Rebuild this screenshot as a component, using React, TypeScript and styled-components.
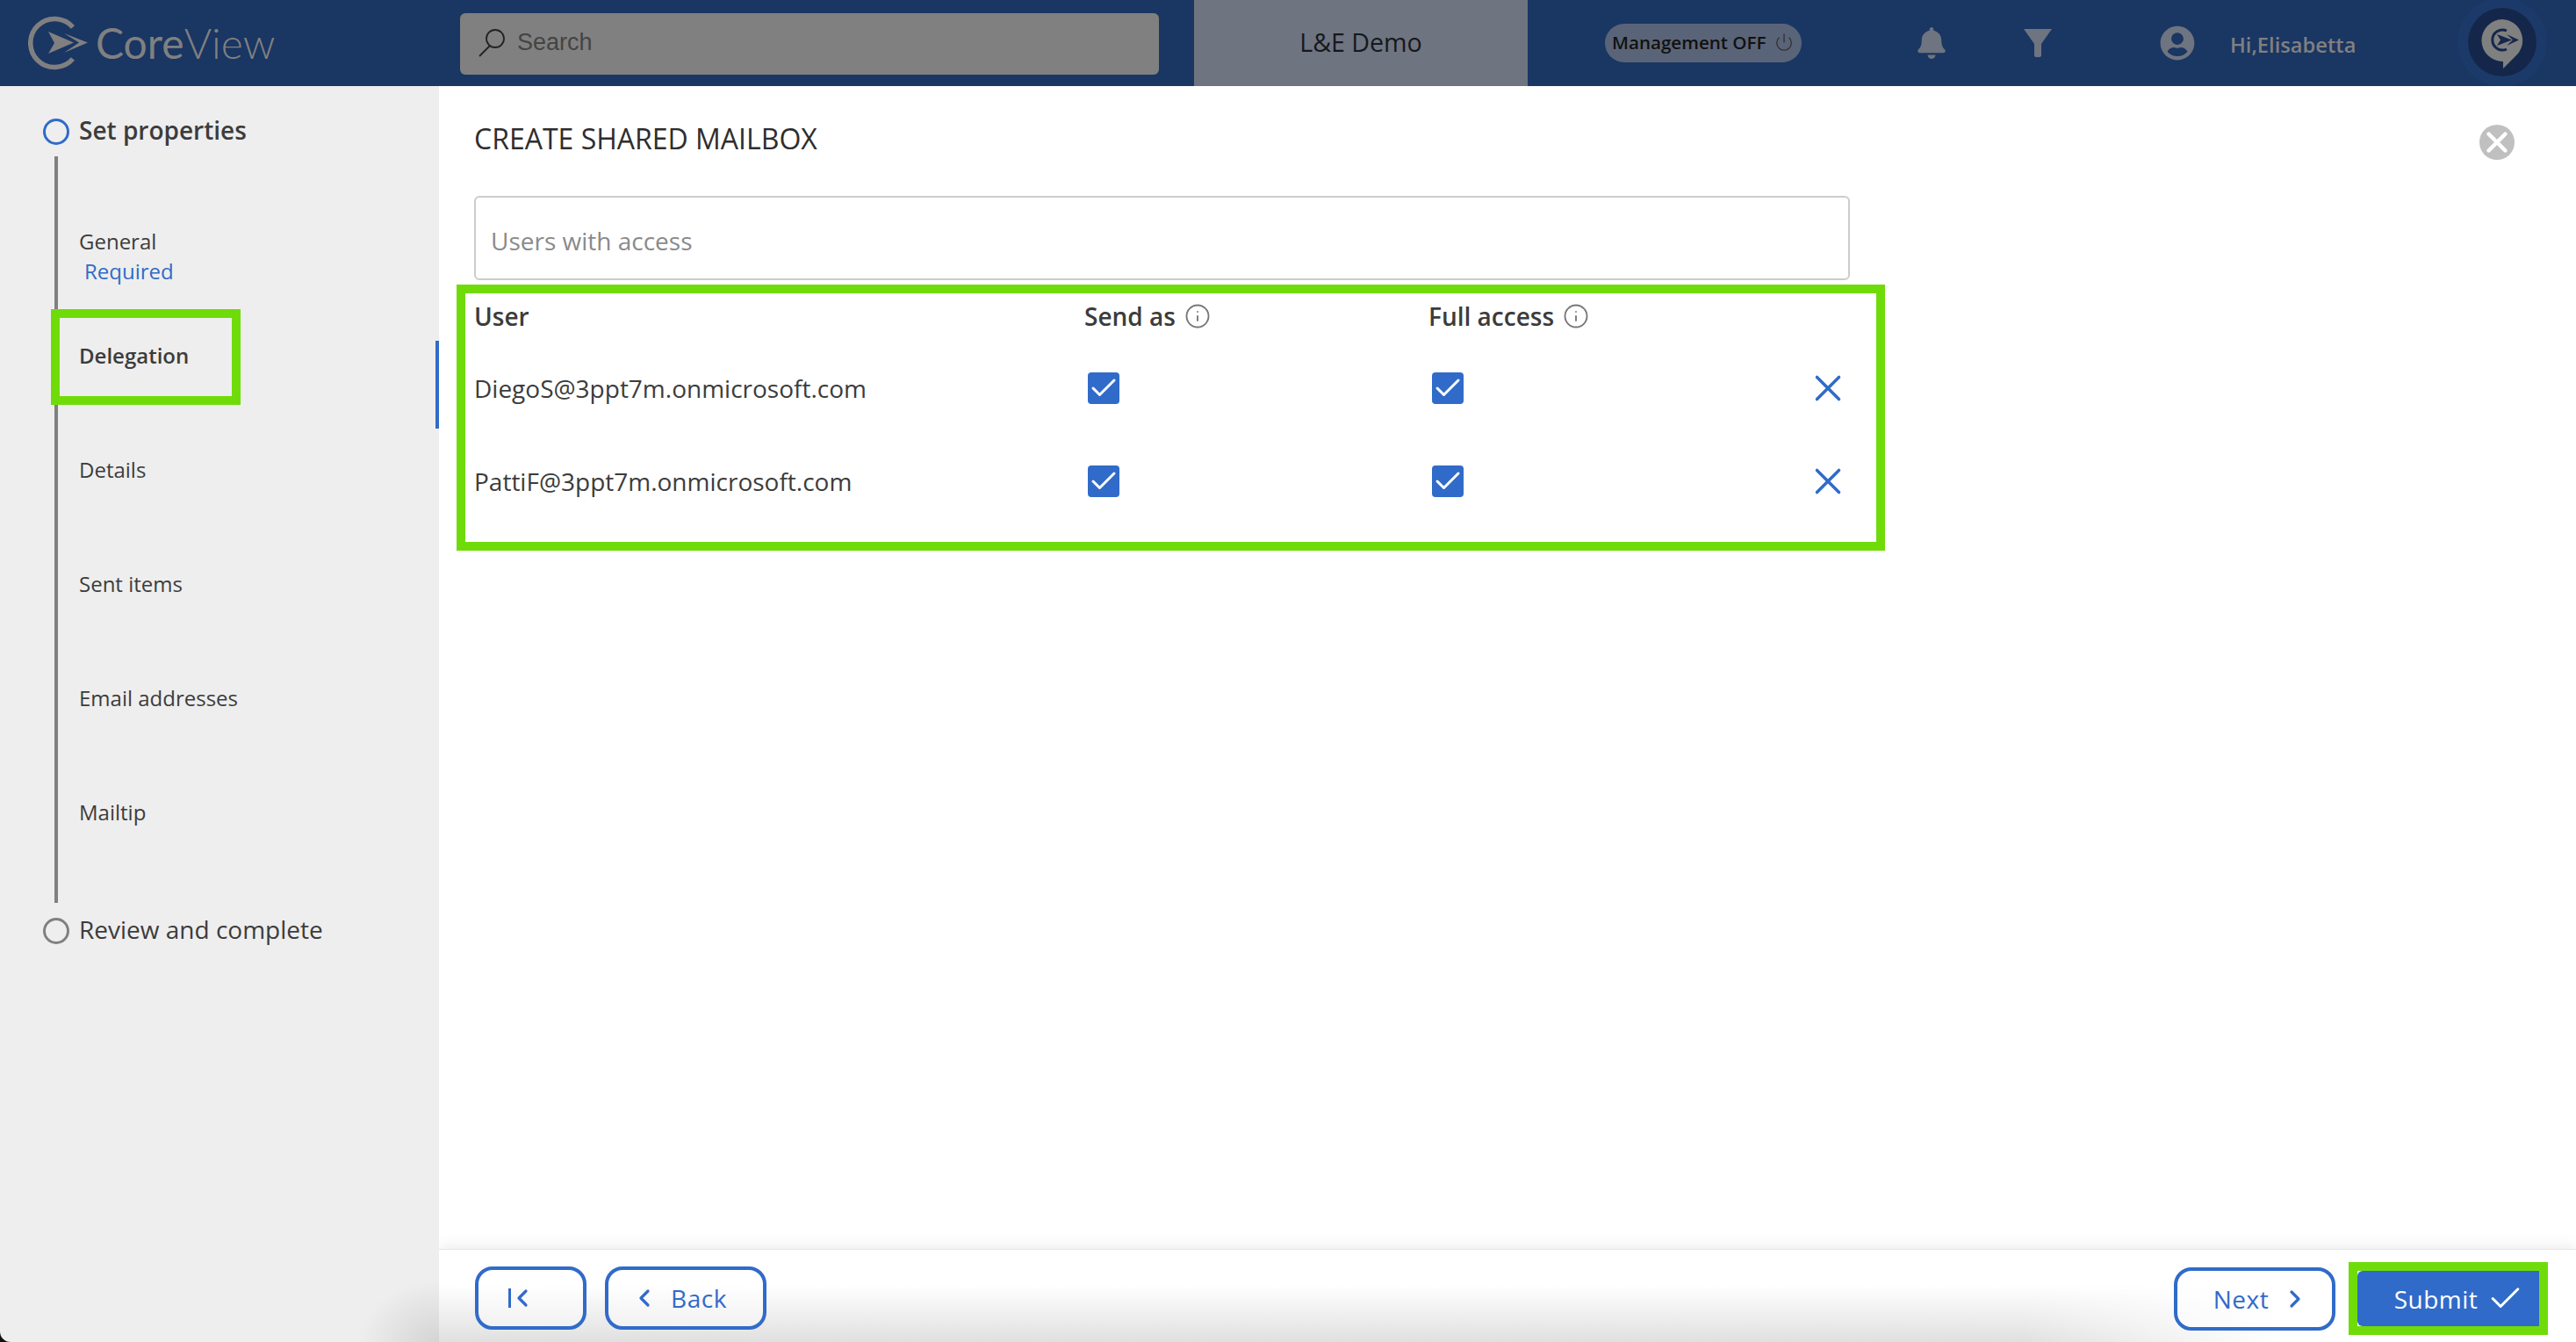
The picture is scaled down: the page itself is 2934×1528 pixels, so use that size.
import React from 'react';
import styled, { createGlobalStyle } from 'styled-components';
import { Check, ChevronLeft, ChevronRight, Info, Power, X } from 'lucide-react';
import { FaBell, FaUserCircle } from 'react-icons/fa';

const blue = '#306bc9';
const green = '#6fdc0a';
const text = '#3c3c3c';

const GlobalStyle = createGlobalStyle`
  html, body {
    margin: 0;
    padding: 0;
    background: #111;
  }
  * {
    box-sizing: border-box;
  }
  svg {
    flex: none;
  }
`;

const Page = styled.div`
  width: 2934px;
  height: 1528px;
  display: grid;
  grid-template-columns: 500px 1fr;
  grid-template-rows: 98px 1fr;
  overflow: hidden;
  border-bottom-left-radius: 12px;
  font-family: 'Open Sans', 'Liberation Sans', sans-serif;
  color: ${text};
`;

/* header */
const Header = styled.header`
  grid-column: 1 / 3;
  display: flex;
  align-items: center;
  height: 98px;
  background: #1a3663;
  padding-right: 45px;
`;

const Brand = styled.div`
  width: 524px;
  height: 98px;
  flex: none;
  display: flex;
  align-items: center;
  padding-left: 32px;
  gap: 7px;
`;

const BrandName = styled.span`
  font-family: Lato, 'Open Sans', sans-serif;
  font-size: 48px;
  font-weight: 400;
  line-height: 1;
  color: #808080;
`;

const BrandLight = styled.span`
  font-weight: 300;
`;

const SearchBox = styled.div`
  width: 796px;
  height: 70px;
  flex: none;
  display: flex;
  align-items: center;
  gap: 13px;
  padding: 0 0 3px 20px;
  margin: 2px 40px 0 0;
  border-radius: 6px;
  background: #808080;
  font-family: 'Liberation Sans', Arial, sans-serif;
  font-size: 27px;
  color: #444;
`;

const Tenant = styled.div`
  width: 380px;
  height: 98px;
  flex: none;
  display: flex;
  align-items: center;
  justify-content: center;
  padding-bottom: 3px;
  background: #6e7480;
  font-size: 28.6px;
  color: #16181c;
`;

const ManagementPill = styled.div`
  width: 224px;
  height: 44px;
  flex: none;
  margin-left: 88px;
  display: flex;
  align-items: center;
  gap: 10px;
  padding: 0 0 3px 8px;
  border-radius: 22px;
  background: #5a6478;
  font-size: 20.6px;
  font-weight: 600;
  white-space: nowrap;
  color: #111;
`;

const HeaderIcon = styled.div<{ $gap: number }>`
  flex: none;
  display: flex;
  margin-left: ${(p) => p.$gap}px;
  color: #6e7480;
`;

const Greeting = styled.span`
  margin-left: 40px;
  margin-top: 4px;
  font-size: 23.7px;
  font-weight: 600;
  color: #808080;
  white-space: nowrap;
`;

const Avatar = styled.div`
  width: 78px;
  height: 78px;
  flex: none;
  margin-left: auto;
  margin-top: -2px;
  border-radius: 50%;
  background: #14274a;
  box-shadow: 0 0 0 12px #1c3a69;
`;

/* sidebar */
const Sidebar = styled.aside`
  position: relative;
  padding: 37px 0 0 49px;
  background: radial-gradient(ellipse 90px 70px at 100% 100%, #d4d4d4, rgba(238, 238, 238, 0)), #eeeeee;
`;

const ActiveMarker = styled.div`
  position: absolute;
  right: 0;
  top: 290px;
  width: 4px;
  height: 100px;
  background: ${blue};
`;

const StepHead = styled.div`
  display: flex;
  align-items: center;
  height: 30px;
  gap: 11px;
`;

const StepCircle = styled.span<{ $active?: boolean }>`
  width: 30px;
  height: 30px;
  flex: none;
  border-radius: 50%;
  border: 3px solid ${(p) => (p.$active ? blue : '#808080')};
`;

const StepTitle = styled.span<{ $active?: boolean }>`
  font-size: 28px;
  line-height: 34px;
  margin-top: -4px;
  font-weight: ${(p) => (p.$active ? 600 : 400)};
  white-space: nowrap;
`;

const SubSteps = styled.div`
  margin: 13px 0 17px 13px;
  height: 850px;
  border-left: 4px solid #808080;
  padding: 80px 0 0 24px;
  display: flex;
  flex-direction: column;
  gap: 96px;
`;

const SubStep = styled.div<{ $active?: boolean }>`
  position: relative;
  height: 34px;
  font-size: 24px;
  line-height: 34px;
  font-weight: ${(p) => (p.$active ? 600 : 400)};
  white-space: nowrap;
`;

const Required = styled.div`
  margin-left: 6px;
  color: ${blue};
  line-height: 33px;
`;

const SideHighlight = styled.div`
  position: absolute;
  left: -32px;
  top: -36px;
  width: 216px;
  height: 109px;
  border: 10px solid ${green};
`;

/* main */
const Main = styled.main`
  display: flex;
  flex-direction: column;
  min-height: 0;
  overflow: hidden;
  background: #fff;
`;

const Content = styled.section`
  flex: 1;
  padding: 38px 70px 0 40px;
`;

const TitleRow = styled.div`
  display: flex;
  justify-content: space-between;
  align-items: flex-start;
  height: 44px;
`;

const Title = styled.h1`
  margin: 0;
  font-size: 32px;
  line-height: 44px;
  font-weight: 400;
  color: #2e2e2e;
`;

const CloseButton = styled.div`
  width: 40px;
  height: 40px;
  margin-top: 6px;
  border-radius: 50%;
  background: #c0c0c0;
  display: flex;
  align-items: center;
  justify-content: center;
  color: #fff;
`;

const UsersInput = styled.div`
  width: 1567px;
  height: 96px;
  margin-top: 43px;
  padding: 6px 0 0 17px;
  display: flex;
  align-items: center;
  border: 2px solid #cccccc;
  border-radius: 6px;
  font-size: 28px;
  color: #8a8a8a;
`;

const TableFrame = styled.div`
  width: 1627px;
  height: 303px;
  margin: 5px 0 0 -20px;
  padding-left: 10px;
  border: 10px solid ${green};
`;

const TableRow = styled.div<{ $head?: boolean }>`
  display: grid;
  grid-template-columns: 695px 392px 425px 60px;
  align-items: center;
  height: ${(p) => (p.$head ? '52px' : '106px')};
  margin-bottom: ${(p) => (p.$head ? '3px' : '0')};
  font-size: 28px;
  font-weight: ${(p) => (p.$head ? 600 : 400)};
  white-space: nowrap;
`;

const HeadCell = styled.div`
  display: flex;
  align-items: center;
  gap: 10px;
`;

const CheckBox = styled.span`
  width: 36px;
  height: 36px;
  margin-left: 4px;
  border-radius: 4px;
  background: ${blue};
  color: #fff;
  display: flex;
  align-items: center;
  justify-content: center;
`;

const RemoveCell = styled.div`
  display: flex;
  justify-content: center;
  color: ${blue};
`;

/* footer */
const Footer = styled.footer`
  height: 106px;
  flex: none;
  display: flex;
  align-items: flex-start;
  justify-content: space-between;
  padding: 19px 32px 0 41px;
  border-top: 1px solid #e6e6e6;
  background: linear-gradient(to right, rgba(255, 255, 255, 0) 74%, #fff 86%),
    linear-gradient(to top, #e0e0e0, #fff 62%);
  box-shadow: 0 -4px 14px rgba(0, 0, 0, 0.07);
`;

const ButtonGroup = styled.div`
  display: flex;
  align-items: center;
  gap: 21px;
`;

const NavButton = styled.div<{ $width: number; $pad?: string }>`
  width: ${(p) => p.$width}px;
  height: 72px;
  display: flex;
  align-items: center;
  justify-content: center;
  gap: 14px;
  padding: ${(p) => p.$pad || '0'};
  border: 4px solid ${blue};
  border-radius: 20px;
  background: rgba(255, 255, 255, 0.4);
  color: ${blue};
  font-size: 28px;
  letter-spacing: 0.5px;
`;

const FirstBar = styled.span`
  width: 3px;
  height: 22px;
  margin-right: -17px;
  background: ${blue};
`;

const RightGroup = styled(ButtonGroup)`
  gap: 15px;
  margin-top: -5px;
`;

const SubmitFrame = styled.div`
  border: 10px solid ${green};
  background: #fff;
`;

const SubmitButton = styled.div`
  width: 207px;
  height: 63px;
  display: flex;
  align-items: center;
  justify-content: center;
  gap: 10px;
  padding-left: 25px;
  border-radius: 6px 0 0 6px;
  background: ${blue};
  color: #fff;
  font-size: 28px;
  letter-spacing: 0.5px;
`;

const LogoMark = () => (
  <svg width="70" height="62" viewBox="32 17 70 62" fill="none">
    <path d="M 83 30 A 27.5 27.5 0 1 0 83 66" stroke="#808080" strokeWidth="5.5" />
    <polygon points="55,35 84,47.5 55,60 62,48" fill="#808080" />
    <polygon points="73,37 100,47.5 73,59 90,47.5" fill="#808080" />
  </svg>
);

const AvatarMark = () => (
  <svg width="78" height="78" viewBox="0 0 78 78" fill="none">
    <path d="M39 13 A24 24 0 0 1 54 55 L40 69 L40 61 A24 24 0 0 1 39 13 Z" fill="#808080" />
    <path d="M44 26 A11.5 11.5 0 1 0 44 47" stroke="#14274a" strokeWidth="3" />
    <polygon points="33,30 50,36.5 33,43 37,36.5" fill="#14274a" />
    <polygon points="44,30 58,36.5 44,43 51,36.5" fill="#14274a" />
  </svg>
);

const SearchGlyph = () => (
  <svg width="32" height="32" viewBox="0 0 32 32" fill="none" stroke="#222" strokeWidth="1.8">
    <ellipse cx="20" cy="11" rx="10" ry="10" />
    <line x1="14" y1="19" x2="2" y2="31" />
  </svg>
);

const FunnelGlyph = () => (
  <svg width="32" height="32" viewBox="0 0 32 32" fill="#6e7480">
    <path d="M0 0 H32 L20 17 V30 Q20 32 18 32 H14 Q12 32 12 30 V17 Z" />
  </svg>
);

const sideSteps = ['Details', 'Sent items', 'Email addresses', 'Mailtip'];

const delegates = ['DiegoS@3ppt7m.onmicrosoft.com', 'PattiF@3ppt7m.onmicrosoft.com'];

const App = () => {
  return (
    <Page>
      <GlobalStyle />
      <Header>
        <Brand>
          <LogoMark />
          <BrandName>
            Core<BrandLight>View</BrandLight>
          </BrandName>
        </Brand>
        <SearchBox>
          <SearchGlyph />
          Search
        </SearchBox>
        <Tenant>L&amp;E Demo</Tenant>
        <ManagementPill>
          Management OFF
          <Power size={22} strokeWidth={1.5} color="#333" />
        </ManagementPill>
        <HeaderIcon $gap={130}>
          <FaBell size={36} />
        </HeaderIcon>
        <HeaderIcon $gap={87}>
          <FunnelGlyph />
        </HeaderIcon>
        <HeaderIcon $gap={123}>
          <FaUserCircle size={40} />
        </HeaderIcon>
        <Greeting>Hi,Elisabetta</Greeting>
        <Avatar>
          <AvatarMark />
        </Avatar>
      </Header>

      <Sidebar>
        <StepHead>
          <StepCircle $active />
          <StepTitle $active>Set properties</StepTitle>
        </StepHead>
        <SubSteps>
          <SubStep>
            General
            <Required>Required</Required>
          </SubStep>
          <SubStep $active>
            Delegation
            <SideHighlight />
          </SubStep>
          {sideSteps.map((step) => (
            <SubStep key={step}>{step}</SubStep>
          ))}
        </SubSteps>
        <StepHead>
          <StepCircle />
          <StepTitle>Review and complete</StepTitle>
        </StepHead>
        <ActiveMarker />
      </Sidebar>

      <Main>
        <Content>
          <TitleRow>
            <Title>CREATE SHARED MAILBOX</Title>
            <CloseButton>
              <X size={38} strokeWidth={2.8} />
            </CloseButton>
          </TitleRow>
          <UsersInput>Users with access</UsersInput>
          <TableFrame>
            <TableRow $head>
              <div>User</div>
              <HeadCell>
                Send as <Info size={30} strokeWidth={1.5} color="#777" />
              </HeadCell>
              <HeadCell>
                Full access <Info size={30} strokeWidth={1.5} color="#777" />
              </HeadCell>
            </TableRow>
            {delegates.map((mail) => (
              <TableRow key={mail}>
                <div>{mail}</div>
                <CheckBox>
                  <Check size={36} strokeWidth={2} />
                </CheckBox>
                <CheckBox>
                  <Check size={36} strokeWidth={2} />
                </CheckBox>
                <RemoveCell>
                  <X size={50} strokeWidth={1.7} />
                </RemoveCell>
              </TableRow>
            ))}
          </TableFrame>
        </Content>
        <Footer>
          <ButtonGroup>
            <NavButton $width={127} $pad="0 20px 0 0">
              <FirstBar />
              <ChevronLeft size={32} strokeWidth={2.4} />
            </NavButton>
            <NavButton $width={184} $pad="0 16px 0 0">
              <ChevronLeft size={32} strokeWidth={2.4} />
              Back
            </NavButton>
          </ButtonGroup>
          <RightGroup>
            <NavButton $width={184} $pad="0 0 0 15px">
              Next
              <ChevronRight size={32} strokeWidth={2.4} />
            </NavButton>
            <SubmitFrame>
              <SubmitButton>
                Submit
                <Check size={43} strokeWidth={1.7} />
              </SubmitButton>
            </SubmitFrame>
          </RightGroup>
        </Footer>
      </Main>
    </Page>
  );
};

export default App;
